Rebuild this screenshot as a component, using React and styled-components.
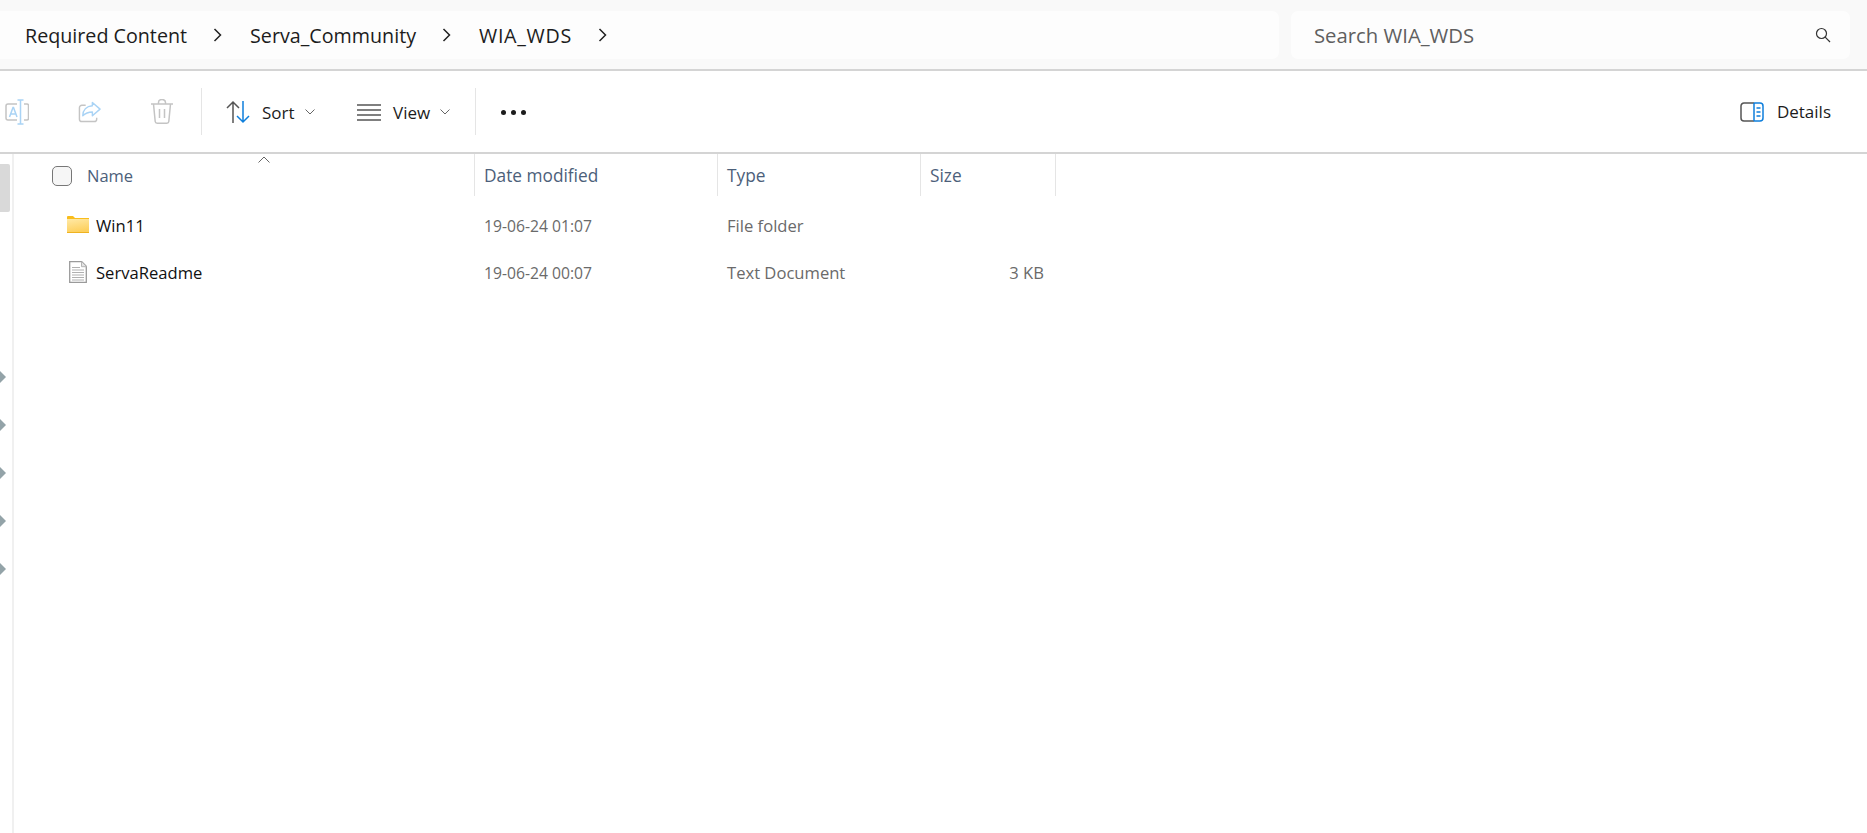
import React from "react";
import styled, { createGlobalStyle } from "styled-components";

const GlobalStyle = createGlobalStyle`
  html, body {
    margin: 0;
    padding: 0;
    background: #fff;
    font-family: "Open Sans", "Noto Sans", "Liberation Sans", sans-serif;
  }
  * { box-sizing: border-box; }
`;

const COLUMNS = "461px 243px 203px 135px";

const BLUE = "#a9d3f5";
const GREY = "#c4c4c4";

// icons
const RenameIcon = () => (
  <svg width="24" height="26" viewBox="0 0 24 26" fill="none" strokeWidth="1.5">
    <path d="M12 5H3a2 2 0 0 0-2 2v12a2 2 0 0 0 2 2h9M19 5h3a1.500 1.500 0 0 1 1.500 1.500v13a1.500 1.500 0 0 1-1.500 1.500h-3" stroke={GREY} />
    <path d="M4.500 18l3.500-9.500h.5L12 18M5.800 15h5" stroke={BLUE} />
    <path d="M15.500 1v24M12.500 1h6M12.500 25h6" stroke={BLUE} />
  </svg>
);

const ShareIcon = () => (
  <svg width="23" height="24" viewBox="0 0 24 24" fill="none" strokeWidth="1.5">
    <path d="M8 5H4a2.500 2.500 0 0 0-2.500 2.500v12A2.500 2.500 0 0 0 4 22h13a2.500 2.500 0 0 0 2.500-2.500V18" stroke={GREY} />
    <path d="M15 2l8 7-8 7v-4c-4 0-7 1-10 4 0-6 4-10 10-10.500z" stroke={BLUE} strokeLinejoin="round" />
  </svg>
);

const TrashIcon = () => (
  <svg width="24" height="26" viewBox="0 0 24 26" fill="none" stroke={GREY} strokeWidth="1.5">
    <path d="M1 5h22M8.500 5V3.500a3.500 3 0 0 1 7 0V5M3.500 5l1.700 17.500a2 2 0 0 0 2 1.800h9.600a2 2 0 0 0 2-1.800L20.500 5M9.500 10v9M14.500 10v9" />
  </svg>
);

const SortIcon = () => (
  <svg width="24" height="24" viewBox="0 0 24 24" fill="none" strokeWidth="1.500">
    <path d="M7 23V2M1 8l6-6 6 6" stroke="#555" />
    <path d="M17 1v21M11 16l6 6 6-6" stroke="#0f7fdc" />
  </svg>
);

const ViewIcon = () => (
  <svg width="24" height="18" viewBox="0 0 24 18" fill="none" stroke="#555" strokeWidth="1.500">
    <path d="M0 2h24M0 7h24M0 12h24M0 17h24" />
  </svg>
);

const DetailsIcon = () => (
  <svg width="24" height="20" viewBox="0 0 24 20" fill="none" strokeWidth="1.500">
    <path d="M14 1H4a3 3 0 0 0-3 3v12a3 3 0 0 0 3 3h10" stroke="#555" />
    <path d="M14 1v18M14 1h6a3 3 0 0 1 3 3v12a3 3 0 0 1-3 3h-6M16.500 6h4M16.500 10h4M16.500 14h4" stroke="#0f7fdc" />
  </svg>
);

const SearchIcon = () => (
  <svg width="16" height="16" viewBox="0 0 16 16" fill="none" stroke="#333" strokeWidth="1.200">
    <circle cx="6.500" cy="6.500" r="5" />
    <path d="M10.200 10.200L15 15" />
  </svg>
);

const ChevronRight = () => (
  <svg width="9" height="14" viewBox="0 0 9 14" fill="none" stroke="#222" strokeWidth="1.500">
    <path d="M1.500 1l6 6-6 6" />
  </svg>
);

const ChevronDown = () => (
  <svg width="10" height="6" viewBox="0 0 10 6" fill="none" stroke="#666" strokeWidth="1">
    <path d="M.5.5L5 5 9.500.5" />
  </svg>
);

const FolderIcon = () => (
  <svg width="22" height="17" viewBox="0 0 22 17">
    <defs>
      <linearGradient id="folderFill" x1="0" y1="0" x2="0.3" y2="1">
        <stop offset="0" stopColor="#ffe9a6" />
        <stop offset="1" stopColor="#fdd05e" />
      </linearGradient>
    </defs>
    <path d="M0 1a1 1 0 0 1 1-1h5l2 2h14v2H0z" fill="#f9bd1c" />
    <path d="M0 3h22v13.500H0z" fill="url(#folderFill)" />
    <path d="M0 16h22v1H0z" fill="#efb320" />
  </svg>
);

const FileIcon = () => (
  <svg width="18" height="22" viewBox="0 0 18 22" fill="none">
    <path d="M.7.7h12l4.600 4.600v16H.7z" fill="#fff" stroke="#9a9a9a" strokeWidth="1.300" />
    <path d="M12.500.7v5h5" fill="#e4e4e4" stroke="#b5b5b5" />
    <path d="M3 6.500h8M3 9h12M3 11.500h12M3 14h12M3 16.500h12M3 19h12" stroke="#b0b0b0" />
  </svg>
);

const SortCaret = () => (
  <svg width="12" height="7" viewBox="0 0 12 7" fill="none" stroke="#666" strokeWidth="1">
    <path d="M.5 6.500L6 1l5.500 5.500" />
  </svg>
);

const App = () => {
  const crumbs = [
    { label: "Required Content", tracking: "0" },
    { label: "Serva_Community", tracking: "0" },
    { label: "WIA_WDS", tracking: "0.7px" },
  ];
  const files = [
    { name: "Win11", icon: <FolderIcon />, date: "19-06-24 01:07", type: "File folder", size: "" },
    { name: "ServaReadme", icon: <FileIcon />, date: "19-06-24 00:07", type: "Text Document", size: "3 KB" },
  ];

  return (
    <Page>
      <GlobalStyle />

      <AddressBar>
        <Breadcrumb>
          {crumbs.map(crumb => (
            <Crumb key={crumb.label} $tracking={crumb.tracking}>
              {crumb.label}
              <ChevronRight />
            </Crumb>
          ))}
        </Breadcrumb>
        <SearchBox>
          <span>Search WIA_WDS</span>
          <SearchIcon />
        </SearchBox>
      </AddressBar>

      <Toolbar>
        <IconGroup>
          <RenameIcon />
          <ShareIcon />
          <TrashIcon />
        </IconGroup>
        <Separator />
        <MenuButton $width="131px">
          <SortIcon />
          <span>Sort</span>
          <ChevronDown />
        </MenuButton>
        <MenuButton $width="142px">
          <ViewIcon />
          <span>View</span>
          <ChevronDown />
        </MenuButton>
        <Separator />
        <Dots>
          <i />
          <i />
          <i />
        </Dots>
        <DetailsButton>
          <DetailsIcon />
          <span>Details</span>
        </DetailsButton>
      </Toolbar>

      <Body>
        <Sidebar>
          <ScrollThumb />
          <Arrows>
            {[0, 1, 2, 3, 4].map(i => (
              <Arrow key={i} />
            ))}
          </Arrows>
        </Sidebar>

        <List>
          <HeaderRow>
            <NameHeader>
              <Checkbox />
              Name
              <CaretHolder>
                <SortCaret />
              </CaretHolder>
            </NameHeader>
            <HeaderCell>Date modified</HeaderCell>
            <HeaderCell>Type</HeaderCell>
            <HeaderCell>Size</HeaderCell>
          </HeaderRow>

          <Rows>
            {files.map(file => (
              <FileRow key={file.name}>
                <NameCell>
                  <IconSlot>{file.icon}</IconSlot>
                  {file.name}
                </NameCell>
                <DateCell>{file.date}</DateCell>
                <Cell>{file.type}</Cell>
                <SizeCell>{file.size}</SizeCell>
              </FileRow>
            ))}
          </Rows>
        </List>
      </Body>
    </Page>
  );
};

const Page = styled.div`
  height: 100vh;
  display: flex;
  flex-direction: column;
  overflow: hidden;
  background: #fff;
`;

const AddressBar = styled.div`
  height: 71px;
  flex: none;
  display: flex;
  gap: 12px;
  padding: 11px 17px 10px 0;
  background: #f9f9f9;
  border-bottom: 2px solid #d4d4d4;
`;

const Breadcrumb = styled.div`
  flex: 1;
  display: flex;
  align-items: center;
  padding-left: 25px;
  gap: 28px;
  background: #fdfdfd;
  border-radius: 0 7px 7px 0;
  font-size: 19.7px;
  color: #1c1c1c;
`;

const Crumb = styled.div`
  display: flex;
  align-items: center;
  gap: 26px;
  letter-spacing: ${props => props.$tracking};
`;

const SearchBox = styled.div`
  width: 559px;
  display: flex;
  align-items: center;
  justify-content: space-between;
  padding: 0 19px 0 23px;
  background: #fdfdfd;
  border-radius: 7px;
  font-size: 20.3px;
  color: #5f5f5f;
`;

const Toolbar = styled.div`
  height: 83px;
  flex: none;
  display: flex;
  align-items: center;
  border-bottom: 2px solid #d4d4d4;
  font-size: 17px;
  color: #1c1c1c;
`;

const IconGroup = styled.div`
  width: 201px;
  display: flex;
  align-items: center;
  gap: 49px;
  padding-left: 5px;
`;

const Separator = styled.div`
  width: 1px;
  height: 47px;
  background: #e5e5e5;
`;

const MenuButton = styled.div`
  width: ${props => props.$width};
  display: flex;
  align-items: center;
  padding-left: 24px;
  gap: 11px;

  span {
    margin: 0 -1px 0 1px;
    padding-top: 1px;
  }
`;

const Dots = styled.div`
  display: flex;
  gap: 5px;
  margin-top: 1px;
  padding-left: 25px;

  i {
    width: 5px;
    height: 5px;
    border-radius: 50%;
    background: #1c1c1c;
  }
`;

const DetailsButton = styled.div`
  margin-left: auto;
  padding-right: 36px;
  display: flex;
  align-items: center;
  gap: 13px;
`;

const Body = styled.div`
  flex: 1;
  display: flex;
  min-height: 0;
`;

const Sidebar = styled.div`
  width: 14px;
  flex: none;
  padding-top: 10px;
  border-right: 2px solid #f0f0f0;
`;

const ScrollThumb = styled.div`
  width: 10px;
  height: 48px;
  background: #d9d9d9;
  border-radius: 0 2px 2px 0;
`;

const Arrows = styled.div`
  display: flex;
  flex-direction: column;
  gap: 36px;
  margin-top: 159px;
`;

const Arrow = styled.div`
  width: 0;
  height: 0;
  border-left: 6px solid #93a3a8;
  border-top: 6px solid transparent;
  border-bottom: 6px solid transparent;
`;

const List = styled.div`
  flex: 1;
`;

const HeaderRow = styled.div`
  height: 42px;
  display: grid;
  grid-template-columns: ${COLUMNS};
  align-items: stretch;
  font-size: 17.3px;
  color: #4c607a;
`;

const HeaderCell = styled.div`
  display: flex;
  align-items: center;
  padding: 1px 0 0 9px;
  border-right: 1px solid #e5e5e5;
`;

const NameHeader = styled(HeaderCell)`
  position: relative;
  padding-left: 38px;
  gap: 15px;
  font-size: 16.5px;
`;

const CaretHolder = styled.div`
  position: absolute;
  top: 2px;
  left: 244px;
  line-height: 0;
`;

const Checkbox = styled.div`
  width: 20px;
  height: 20px;
  background: #f6f6f6;
  border: 1px solid #777;
  border-radius: 5px;
`;

const Rows = styled.div`
  padding-top: 6px;
`;

const FileRow = styled.div`
  height: 47px;
  display: grid;
  grid-template-columns: ${COLUMNS};
  align-items: center;
  font-size: 16.6px;
  color: #6a6a6a;
`;

const Cell = styled.div`
  padding-left: 9px;
`;

const DateCell = styled(Cell)`
  font-size: 15.7px;
`;

const NameCell = styled.div`
  display: flex;
  align-items: center;
  padding-left: 53px;
  gap: 7px;
  color: #111;
`;

const IconSlot = styled.div`
  width: 22px;
  margin-top: -2px;
  display: flex;
  justify-content: center;
`;

const SizeCell = styled(Cell)`
  text-align: right;
  padding-right: 12px;
`;

export default App;
